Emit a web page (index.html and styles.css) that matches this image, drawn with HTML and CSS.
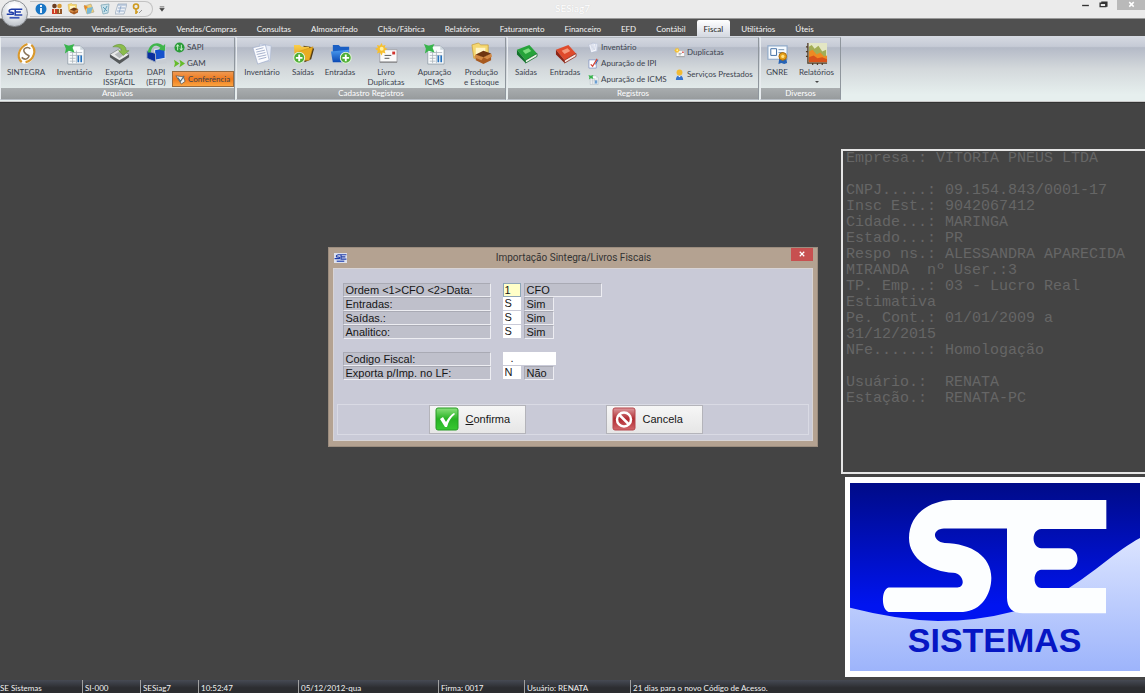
FILE: index.html
```html
<!DOCTYPE html>
<html lang="pt-BR">
<head>
<meta charset="utf-8">
<title>SESiag7</title>
<link rel="stylesheet" href="styles.css">
</head>
<body>
<svg class="defs" aria-hidden="true">
  <defs>
    <linearGradient id="gBlue" x1="0" y1="0" x2="0" y2="1"><stop offset="0" stop-color="#4a9bf0"/><stop offset="1" stop-color="#0b49b4"/></linearGradient>
    <linearGradient id="gGold" x1="0" y1="0" x2="0" y2="1"><stop offset="0" stop-color="#fbd04c"/><stop offset="1" stop-color="#dc9410"/></linearGradient>
    <linearGradient id="gGreen" x1="0" y1="0" x2="0" y2="1"><stop offset="0" stop-color="#8be07c"/><stop offset=".5" stop-color="#27b324"/><stop offset="1" stop-color="#38c832"/></linearGradient>
    <linearGradient id="gRed" x1="0" y1="0" x2="0" y2="1"><stop offset="0" stop-color="#dd9a9e"/><stop offset=".5" stop-color="#b02a30"/><stop offset="1" stop-color="#d2686c"/></linearGradient>
    <symbol id="plus" viewBox="0 0 12 12"><circle cx="6" cy="6" r="5.3" fill="#4fae35" stroke="#e3f5da" stroke-width="1"/><path d="M6 2.8v6.4M2.8 6h6.4" stroke="#fff" stroke-width="1.8"/></symbol>
    <symbol id="sintegra" viewBox="0 0 24 24"><ellipse cx="12" cy="12" rx="8.5" ry="11" fill="#fff" transform="rotate(20 12 12)"/><path d="M16 7C13 4 7 7 10 11s6 2 4 5-5 2-7 0" fill="none" stroke="#8a7458" stroke-width="1.600"/><path d="M17 3c6 5 3 16-6 18M7 21C1 16 4 5 13 2" fill="none" stroke="#d9982c" stroke-width="2.200"/></symbol>
    <symbol id="sheet" viewBox="0 0 24 24"><path d="M5 4h13l4 4v15H5z" fill="#fafcfd" stroke="#8d9aa5" stroke-width=".8"/><path d="M18 4v4h4z" fill="#ccd5dc"/><path d="M7 11h13M7 14h13M7 17h6M7 20h6M10 9v13M14 9v13" stroke="#a7b0b8" stroke-width=".8"/><path d="M16 14v7M19 14v7" stroke="#2672bd" stroke-width="1.800"/><path d="M1 2l5 2 6-2-2 4 2 5-6-2-4 3 1-5z" fill="#38b54c"/></symbol>
    <symbol id="export" viewBox="0 0 24 24"><path d="M2 13l10-6 10 6-10 9z" fill="#e8e9e9" stroke="#777b7c" stroke-width=".7"/><path d="M2 13l10 6 10-6v3l-10 7-10-7z" fill="#55595a"/><path d="M7 13l5-3 5 3-5 4z" fill="#b5b9ba"/><path d="M5 5c7-5 14-2 14 4l3 0-6 5-5-5h3c0-4-4-4-9-4z" fill="#8bbc4c" stroke="#5b8a30" stroke-width=".5"/></symbol>
    <symbol id="dapi" viewBox="0 0 24 24"><path d="M10 8l11-2v11l-11 2z" fill="#1551cc" stroke="#dbe0ea" stroke-width="1.2"/><path d="M2 9l9 3v9l-9-4z" fill="#0a2f9e" stroke="#a2adc0" stroke-width="1"/><path d="M13 20l8-1 2 3-9 1zM3 19l6 2v2l-6-1z" fill="#c8cdd3"/><path d="M3 11C4 1 14-1 19 4l2-2v7l-7-1 2-2C11 2 7 4 6 11z" fill="#3fb54a"/></symbol>
    <symbol id="papers" viewBox="0 0 24 24"><path d="M9 2l12 2-1 16-11 1z" fill="#e5eaf5" stroke="#aab6d0" stroke-width=".6"/><path d="M2 6l13-3 4 16-12 4z" fill="#fbfcff" stroke="#9eabc9" stroke-width=".7"/><path d="M5 8l8-2M5.500 10.500l9-2M6 13l9-2M7 15.500l9-2M8 18l8-2" stroke="#8d9cbe" stroke-width=".8"/></symbol>
    <symbol id="folderOut" viewBox="0 0 24 24"><path d="M12 4l7 1 4 2-3 11-7 3z" fill="#4a3512"/><path d="M2 3h6l2 2h8l-1 14H3z" fill="url(#gGold)"/><path d="M7 10l15-5-4 14H4z" fill="#e9ac22" stroke="#c98d12" stroke-width=".5"/><use href="#plus" x="1" y="10" width="13" height="13"/></symbol>
    <symbol id="folderIn" viewBox="0 0 24 24"><path d="M4 3h6l2 2h9v14H4z" fill="#1a5fc4"/><path d="M2 10l19-2-2 13H4z" fill="url(#gBlue)"/><use href="#plus" x="11" y="10" width="13" height="13"/></symbol>
    <symbol id="mail" viewBox="0 0 24 24"><path d="M5 8h18v13H5z" fill="#fafafa" stroke="#a5a5aa"/><path d="M5 21h18" stroke="#777" stroke-width="1"/><path d="M18 10h3v3h-3z" fill="#d1332e"/><path d="M10 14h7M10 17h5" stroke="#555" stroke-width="1"/><path d="M7 1l1 3 3-1-1 3 3 1-3 2 1 3-3-1-1 3-2-3-3 1 1-3-3-2 3-1-1-3 3 1z" fill="#f7bf2d"/><circle cx="7" cy="7" r="2" fill="#fff1a1"/></symbol>
    <symbol id="box" viewBox="0 0 24 24"><path d="M2 3l7-2 2 2h8v14H4z" fill="#f5d872" stroke="#c6992c" stroke-width=".7"/><path d="M6 6h10v7H6z" fill="#fff5c8"/><path d="M6 13l8 3 8-4v7l-8 4-8-4z" fill="#a75a20"/><path d="M6 13l-2 3 8 3 2-3 4 2 5-3-1-3-8 4z" fill="#d38a45"/><path d="M6 13l8-4 8 3-8 4z" fill="#6e3511"/></symbol>
    <symbol id="bookG" viewBox="0 0 24 24"><path d="M2 8l13-5 8 9-12 7z" fill="#27a33a"/><path d="M2 8v5l9 9v-3z" fill="#11722a"/><path d="M11 19l12-7v3l-12 7z" fill="#eef3e9" stroke="#0c6b22" stroke-width=".8"/><path d="M8 9l6-2.500 3 3-6 3z" fill="#7bdc7e"/></symbol>
    <symbol id="bookR" viewBox="0 0 24 24"><path d="M2 8l13-5 8 9-12 7z" fill="#df4b2c"/><path d="M2 8v5l9 9v-3z" fill="#8d2314"/><path d="M11 19l12-7v3l-12 7z" fill="#f6ece7" stroke="#8d2314" stroke-width=".8"/><path d="M8 9l6-2.500 3 3-6 3z" fill="#f59a7b"/></symbol>
    <symbol id="cert" viewBox="0 0 24 24"><path d="M2 4h20v14H2z" fill="#f6fafe" stroke="#8fa9c8" stroke-width="1.200"/><path d="M5 7h6v7H5z" fill="#fff" stroke="#3e6ca2"/><path d="M13 8h6M13 11h5" stroke="#7592b1"/><path d="M14 16l-1 7 3-1 3 1 3-1-1-6z" fill="#2663b5"/><circle cx="17.500" cy="15" r="4" fill="#e6a019" stroke="#a96909"/><circle cx="17.500" cy="15" r="1.700" fill="#ffe180"/></symbol>
    <symbol id="chart" viewBox="0 0 24 24"><path d="M4 1h19v20H4z" fill="#e3e6c4"/><path d="M4 5l3-2 3 4 4-3 4 6 4-2v12H4z" fill="#a3ad55"/><path d="M4 10l4-2 4 5 4-2 4 4 3-1v7H4z" fill="#ee8a22"/><path d="M4 16l5-2 4 3 5-1 5 2v3H4z" fill="#d8521b"/><path d="M3 1v21h20M1 5h2M1 10h2M1 15h2M8 22v2M13 22v2M18 22v2" fill="none" stroke="#513c25" stroke-width="1.300"/></symbol>
    <symbol id="sapi" viewBox="0 0 12 12"><circle cx="6" cy="6" r="5.500" fill="#289b36"/><path d="M4 3v6M2.500 5L4 3l1.500 2M8 3v6M6.500 7L8 9l1.500-2" fill="none" stroke="#d6f5d5" stroke-width="1"/></symbol>
    <symbol id="gam" viewBox="0 0 12 12"><path d="M0 2l6 4-6 4 1-4zM6 2l6 4-6 4 1-4z" fill="#66bc2b"/></symbol>
    <symbol id="conf" viewBox="0 0 12 12"><path d="M1 2l8 1 2 5-4 3z" fill="#eceff0" stroke="#555" stroke-width=".8"/><path d="M3 4l3 4 4-6" fill="none" stroke="#526b78" stroke-width="1.200"/></symbol>
    <symbol id="ipi" viewBox="0 0 12 12"><path d="M1 2h8v9H1z" fill="#fff" stroke="#7b8fc0" stroke-width=".8"/><path d="M3 7l2 2 5-8" fill="none" stroke="#d24436" stroke-width="1.400"/><path d="M8 7l3-5" stroke="#315fb0" stroke-width="1"/></symbol>
    <symbol id="user" viewBox="0 0 12 12"><path d="M2 12c0-7 8-7 8 0z" fill="#3674cf"/><path d="M4 7l2 2 2-2z" fill="#fff"/><circle cx="6" cy="3.800" r="3.200" fill="#f2bb35"/></symbol>
    <symbol id="info" viewBox="0 0 12 12"><circle cx="6" cy="6" r="5.500" fill="#1976c5"/><path d="M6 2v2M6 5v5" stroke="#fff" stroke-width="1.800"/></symbol>
    <symbol id="people" viewBox="0 0 12 12"><circle cx="3.500" cy="3" r="2.300" fill="#6b3d20"/><circle cx="8.500" cy="3" r="2.300" fill="#d89a32"/><path d="M1 11V6h5v5z" fill="#cf3d28"/><path d="M6 11V6h5v5z" fill="#93582c"/><path d="M3 6h1v4H3zM8 6h1v4H8z" fill="#f5dfa5"/></symbol>
    <symbol id="note" viewBox="0 0 12 12"><path d="M1 3l7-2 3 8-7 2z" fill="#f2cf75" stroke="#a9a38a" stroke-width=".6"/><path d="M4 5l6-1-2 6-4 1z" fill="#79b8d5"/><path d="M1 2l4 2-3 3z" fill="#e38629"/></symbol>
    <symbol id="bin" viewBox="0 0 12 12"><path d="M2 2l8-1-1 9-5 1z" fill="#c9e1ea" stroke="#7fa7b7" stroke-width=".8"/><path d="M4 4l4 4M8 3L5 9" stroke="#5c9db8"/></symbol>
    <symbol id="table" viewBox="0 0 12 12"><path d="M3 1h9l-3 10H0z" fill="#edf1f6" stroke="#94a5b8" stroke-width=".7"/><path d="M3 2h8M3 5h7M2 8h7M6 3L4 10" stroke="#86a1c4" stroke-width=".8"/></symbol>
    <symbol id="key" viewBox="0 0 12 12"><circle cx="5" cy="3.500" r="2.500" fill="none" stroke="#cf9a1c" stroke-width="1.600"/><path d="M5 6v5M5 9h2" stroke="#cf9a1c" stroke-width="1.600"/><path d="M8 10l3-3" stroke="#999"/></symbol>
    <symbol id="seMark" viewBox="0 0 24 16"><path d="M23 2H8Q3 3 5 6q7 0 5 3H1M13 3v7h10M14 6h7" fill="none" stroke="#203ea9" stroke-width="2.200"/><path d="M5 14h14" stroke="#3956b8" stroke-width="2.500"/></symbol>
  </defs>
</svg>

<div class="app">
  <header class="titlebar">
    <button class="orb" aria-label="Menu principal"><svg><use href="#seMark"/></svg></button>
    <div class="quick">
      <button aria-label="Informações"><svg><use href="#info"/></svg></button>
      <button aria-label="Clientes"><svg><use href="#people"/></svg></button>
      <button aria-label="Produtos"><svg><use href="#box"/></svg></button>
      <button aria-label="Notas"><svg><use href="#note"/></svg></button>
      <button aria-label="Lixeira"><svg><use href="#bin"/></svg></button>
      <button aria-label="Tabela"><svg><use href="#table"/></svg></button>
      <button aria-label="Senha"><svg><use href="#key"/></svg></button>
    </div>
    <button class="more" aria-label="Personalizar"><svg viewBox="0 0 8 8"><path d="M1 1h6M1 3h6L4 7z" fill="#444" stroke="#444" stroke-width=".8"/></svg></button>
    <h1 class="app-title">SESiag7</h1>
    <div class="window-buttons">
      <button aria-label="Minimizar"><svg viewBox="0 0 8 8"><path d="M1 4h6" stroke="#333" stroke-width="1.200"/></svg></button>
      <button aria-label="Restaurar"><svg viewBox="0 0 8 8"><path d="M1 2h5v3H1zM2 1h5v4" fill="none" stroke="#333" stroke-width="1.200"/></svg></button>
      <button class="close-app" aria-label="Fechar"><svg viewBox="0 0 8 8"><path d="M2 1l4 4M6 1L2 5" stroke="#fff" stroke-width="1.300"/></svg></button>
    </div>
  </header>

  <nav class="tabs">
    <a href="#">Cadastro</a><a href="#">Vendas/Expedição</a><a href="#">Vendas/Compras</a><a href="#">Consultas</a><a href="#">Almoxarifado</a><a href="#">Chão/Fábrica</a><a href="#">Relatórios</a><a href="#">Faturamento</a><a href="#">Financeiro</a><a href="#">EFD</a><a href="#">Contábil</a><a href="#" class="active">Fiscal</a><a href="#">Utilitários</a><a href="#">Úteis</a>
  </nav>

  <div class="ribbon">
    <section class="group">
      <div class="tools">
        <button class="big w50"><svg><use href="#sintegra"/></svg>SINTEGRA</button>
        <button class="big w46"><svg><use href="#sheet"/></svg>Inventário</button>
        <button class="big w42"><svg><use href="#export"/></svg>Exporta<br>ISSFÁCIL</button>
        <button class="big w32"><svg><use href="#dapi"/></svg>DAPI<br>(EFD)</button>
        <div class="stack w62">
          <button class="small"><svg><use href="#sapi"/></svg>SAPI</button>
          <button class="small"><svg><use href="#gam"/></svg>GAM</button>
          <button class="small hot"><svg><use href="#conf"/></svg>Conferência</button>
        </div>
      </div>
      <h2>Arquivos</h2>
    </section>
    <section class="group">
      <div class="tools">
        <button class="big w50"><svg><use href="#papers"/></svg>Inventário</button>
        <button class="big w32"><svg><use href="#folderOut"/></svg>Saídas</button>
        <button class="big w42"><svg><use href="#folderIn"/></svg>Entradas</button>
        <button class="big w50"><svg><use href="#mail"/></svg>Livro<br>Duplicatas</button>
        <button class="big w46"><svg><use href="#sheet"/></svg>Apuração<br>ICMS</button>
        <button class="big w46"><svg><use href="#box"/></svg>Produção<br>e Estoque</button>
      </div>
      <h2>Cadastro Registros</h2>
    </section>
    <section class="group">
      <div class="tools">
        <button class="big w36"><svg><use href="#bookG"/></svg>Saídas</button>
        <button class="big w42"><svg><use href="#bookR"/></svg>Entradas</button>
        <div class="stack w86">
          <button class="small"><svg><use href="#papers"/></svg>Inventário</button>
          <button class="small"><svg><use href="#ipi"/></svg>Apuração de IPI</button>
          <button class="small"><svg><use href="#sheet"/></svg>Apuração de ICMS</button>
        </div>
        <div class="stack pair w86">
          <button class="small"><svg><use href="#mail"/></svg>Duplicatas</button>
          <button class="small"><svg><use href="#user"/></svg>Serviços Prestados</button>
        </div>
      </div>
      <h2>Registros</h2>
    </section>
    <section class="group">
      <div class="tools">
        <button class="big w32"><svg><use href="#cert"/></svg>GNRE</button>
        <button class="big w46"><svg><use href="#chart"/></svg>Relatórios<span class="caret"></span></button>
      </div>
      <h2>Diversos</h2>
    </section>
  </div>

  <main class="desktop">
    <aside class="side">
      <pre class="company">Empresa.: VITORIA PNEUS LTDA

CNPJ.....: 09.154.843/0001-17
Insc Est.: 9042067412
Cidade...: MARINGA
Estado...: PR
Respo ns.: ALESSANDRA APARECIDA
MIRANDA  nº User.:3
TP. Emp..: 03 - Lucro Real
Estimativa
Pe. Cont.: 01/01/2009 a
31/12/2015
NFe......: Homologação

Usuário.:  RENATA
Estação.:  RENATA-PC</pre>
      <div class="brand">
        <svg viewBox="36 69 870 567" preserveAspectRatio="none" role="img" aria-label="SE Sistemas">
          <defs>
            <linearGradient id="sky" x1="0" y1="0" x2="0" y2="1"><stop offset="0" stop-color="#000b88"/><stop offset=".65" stop-color="#0014f0"/><stop offset="1" stop-color="#0014f8"/></linearGradient>
            <linearGradient id="wave" x1="0" y1="0" x2="0" y2="1"><stop offset="0" stop-color="#dbe4ff"/><stop offset="1" stop-color="#9db4fb"/></linearGradient>
          </defs>
          <rect x="36" y="69" width="870" height="567" fill="url(#sky)"/>
          <path d="M36 445Q180 482 300 485 420 485 520 458 620 432 695 384 C760 345 840 270 906 235V636H36z" fill="url(#wave)"/>
          <path d="M805 120H345C265 122 213 170 213 235 213 300 280 336 345 340 378 342 384 384 358 384H152C130 388 128 452 152 458H375C430 455 460 405 460 355 460 290 400 252 320 250 283 245 280 208 318 206H507V415Q508 462 555 462H804V386H610C583 384 583 333 610 331H690C728 328 728 268 690 266H610C580 264 578 210 610 208H805z" fill="#fcfeff"/>
          <text x="470" y="578" text-anchor="middle" class="brand-name">SISTEMAS</text>
        </svg>
      </div>
    </aside>
  </main>

  <footer class="status">
    <span class="c82">SE Sistemas</span><span class="c58">SI-000</span><span class="c58">SESiag7</span><span class="c100">10:52:47</span><span class="c140">05/12/2012-qua</span><span class="c86">Firma: 0017</span><span class="c106">Usuário: RENATA</span><span class="rest">21 dias para o novo Código de Acesso.</span>
  </footer>

  <div class="overlay">
    <form class="dialog" role="dialog" aria-labelledby="dlg-title">
      <div class="dialog-bar">
        <svg class="dialog-icon"><use href="#seMark"/></svg>
        <h2 id="dlg-title">Importação Sintegra/Livros Fiscais</h2>
        <button type="button" class="dialog-close" aria-label="Fechar"><svg viewBox="0 0 8 8"><path d="M1 1l6 6M7 1L1 7" stroke="#fff" stroke-width="1.600"/></svg></button>
      </div>
      <div class="dialog-body">
        <div class="fields">
          <div class="row"><label for="ordem">Ordem &lt;1&gt;CFO &lt;2&gt;Data:</label><input id="ordem" class="focus" value="1"><output class="wide">CFO</output></div>
          <div class="row"><label for="ent">Entradas:</label><input id="ent" value="S"><output>Sim</output></div>
          <div class="row"><label for="sai">Saídas.:</label><input id="sai" value="S"><output>Sim</output></div>
          <div class="row"><label for="ana">Analitico:</label><input id="ana" value="S"><output>Sim</output></div>
          <div class="row second"><label for="cod">Codigo Fiscal:</label><input id="cod" class="long" value="  ."></div>
          <div class="row"><label for="exp">Exporta p/Imp. no LF:</label><input id="exp" value="N"><output>Não</output></div>
        </div>
        <div class="actions">
          <button type="button"><svg viewBox="0 0 24 24"><rect x="1" y="1" width="22" height="22" rx="2" fill="url(#gGreen)" stroke="#269a25"/><path d="M5 12l3-2 3 5q4-7 8-9l1 1q-6 5-8 13h-2z" fill="#fff"/></svg><span><u>C</u>onfirma</span></button>
          <button type="button"><svg viewBox="0 0 24 24"><rect x="1" y="1" width="22" height="22" rx="2" fill="url(#gRed)" stroke="#b6474c"/><circle cx="12" cy="12.500" r="7" fill="none" stroke="#fff" stroke-width="2.500"/><path d="M7 7.500l10 10" stroke="#fff" stroke-width="2.500"/></svg><span>Cancela</span></button>
        </div>
      </div>
    </form>
  </div>
</div>
</body>
</html>
```
FILE: styles.css
```css
* { box-sizing: border-box; }
body { margin: 0; font-family: Lato, "Open Sans", sans-serif; font-size: 8px; }
button { margin: 0; padding: 0; border: 0; background: none; font: inherit; color: inherit; }
h1, h2, pre { margin: 0; font-weight: normal; }
svg { display: block; }
.defs { position: absolute; width: 0; height: 0; }

.app { position: relative; display: flex; flex-direction: column; height: 100vh; overflow: hidden; background: #444; }

/* Title bar */
.titlebar { position: relative; display: flex; align-items: center; flex: none; height: 18px; background: #ebebeb; }
.orb { position: absolute; left: 1px; top: 0; z-index: 2; display: grid; place-items: center; width: 27px; height: 27px; border: 1px solid #8d9095; border-radius: 50%; background: radial-gradient(circle at 50% 30%, #fff 20%, #d5d9de 60%, #a7adb5); }
.orb svg { width: 17px; height: 13px; }
.quick { display: flex; align-items: center; gap: 4px; height: 16px; margin-left: 30px; padding: 0 9px 0 5px; border: 1px solid #c2c2c2; border-left: 0; border-radius: 0 8px 8px 0; }
.quick svg { width: 12px; height: 12px; }
.more { margin-left: 6px; }
.more svg { width: 6px; height: 6px; }
.app-title { position: absolute; left: 0; right: 0; top: 2px; text-align: center; pointer-events: none; font-size: 10px; line-height: 13px; color: #fff; text-shadow: 0 0 1px #ccc; }
.window-buttons { display: flex; gap: 9px; height: 10px; margin: 0 0 8px auto; }
.window-buttons svg { width: 9px; height: 9px; }
.close-app { width: 28px; background: #b9b9b9; }
.close-app svg { margin: 0 auto; }

/* Menu tabs */
.tabs { display: flex; flex: none; gap: 2px; height: 18px; padding: 1px 0 0 31px; background: #505050; border-top: 1px solid #999; }
.tabs a { padding: 0 9px; line-height: 18px; color: #f4f4f4; text-decoration: none; white-space: nowrap; }
.tabs .active { padding: 0 7px; border-radius: 2px 2px 0 0; background: linear-gradient(#fff, #d6dae2); color: #222; }

/* Ribbon */
.ribbon { display: flex; flex: none; gap: 1px; height: 66px; padding: 1px 0; background: linear-gradient(#d6dae2, #c6cbd6 16%, #b4bac7 18%, #d3d8db 50%, #e6efee 90%); border-bottom: 1px solid #c8c8c8; color: #3c434e; }
.group { display: flex; flex-direction: column; border: 1px solid #b5bbc2; border-left-color: #e8ecef; border-right-color: #8f969d; }
.group h2 { height: 11px; background: linear-gradient(#a9adaf, #979b9d); color: #fff; text-align: center; font-size: 8px; line-height: 11px; }
.tools { display: flex; flex: 1; min-height: 0; }
.big { display: flex; flex-direction: column; align-items: center; justify-content: flex-start; padding-top: 4px; line-height: 10px; text-align: center; white-space: nowrap; }
.big svg { flex: none; width: 23px; height: 23px; margin-bottom: 2px; }
.w32 { width: 32px; } .w36 { width: 36px; } .w42 { width: 42px; } .w46 { width: 47px; } .w50 { width: 50px; } .w62 { width: 62px; } .w86 { width: 86px; }
.stack { display: flex; flex-direction: column; justify-content: flex-start; padding-top: 1px; }
.pair { padding-top: 6px; gap: 6px; }
.small { display: flex; align-items: center; gap: 2px; height: 16px; padding: 0 2px; white-space: nowrap; }
.small svg { flex: none; width: 11px; height: 11px; }
.hot { border: 1px solid #9a6a3d; background: linear-gradient(#ef9851, #f07a1d 50%, #fba440); }
.caret { margin-top: 4px; border: 2px solid transparent; border-top-color: #444; }

/* Desktop */
.desktop { display: flex; flex: 1; justify-content: flex-end; min-height: 0; padding-top: 46px; border-top: 1px solid #333; }
.side { display: flex; flex-direction: column; gap: 3px; width: 304px; }
.company { height: 325px; padding: 0 0 0 3px; border: 2px solid #e6e6e6; border-right: 0; font: 15px/16px "Liberation Mono", monospace; color: #666; }
.brand { align-self: flex-end; width: 300px; height: 200px; padding: 6px 5px; background: #fff; }
.brand svg { width: 100%; height: 100%; }
.brand-name { font: bold 102px "Liberation Sans", sans-serif; fill: #0616c4; }

/* Status bar */
.status { display: flex; flex: none; height: 13px; overflow: hidden; background: linear-gradient(#464a54, #2c2d30 60%); line-height: 17px; color: #f2f2f2; white-space: nowrap; }
.status span + span { padding-left: 2px; border-left: 1px solid #a0a0a0; }
.c58 { width: 58px; } .c82 { width: 82px; } .c86 { width: 86px; } .c100 { width: 100px; } .c106 { width: 106px; } .c140 { width: 140px; }
.rest { flex: 1; }

/* Import dialog */
.overlay { position: absolute; inset: 0; display: grid; place-items: center; }
.dialog { width: 490px; padding: 0 4px 5px; border: 1px solid #9c8d7f; background: #b4a291; font-family: "Liberation Sans", sans-serif; font-size: 11px; color: #161616; }
.dialog-bar { display: flex; align-items: center; height: 20px; }
.dialog-icon { width: 13px; height: 10px; margin-left: 1px; background: #dde1ee; }
.dialog-bar h2 { flex: 1; padding-left: 10px; text-align: center; font: 10px/20px Roboto, sans-serif; color: #333; }
.dialog-close { align-self: flex-start; display: grid; place-items: center; width: 22px; height: 13px; background: #c75050; }
.dialog-close svg { width: 6px; height: 6px; }
.dialog-body { padding: 14px 3px 5px; border: 1px solid #d8d4d6; background: #c9cad7; }
.fields { padding: 0 6px; }
.row { display: flex; height: 14px; }
.second { margin-top: 13px; }
.row label, .row output { padding-left: 2px; border: 1px solid #a9aab4; border-right-color: #ededf2; border-bottom-color: #ededf2; background: #bfc0cb; line-height: 13px; }
.row label { width: 148px; margin-right: 12px; }
.row input { width: 18px; margin-right: 3px; padding: 0 2px; border: 0; border-bottom: 1px solid #c9cad7; background: #fff; font: inherit; color: inherit; }
.row .focus { border: 1px solid #8ea6b8; background: #ffffc8; padding: 0 1px; }
.row .long { width: 53px; }
.row output { width: 30px; }
.row .wide { width: 78px; }
.actions { display: flex; gap: 80px; margin-top: 24px; padding-left: 91px; border: 1px solid #d9dae4; }
.actions button { display: flex; align-items: center; gap: 7px; width: 97px; height: 29px; padding-left: 5px; border: 1px solid #b4b4ba; background: linear-gradient(#f6f6f6, #e6e6e6); }
.actions svg { width: 24px; height: 24px; }
```
